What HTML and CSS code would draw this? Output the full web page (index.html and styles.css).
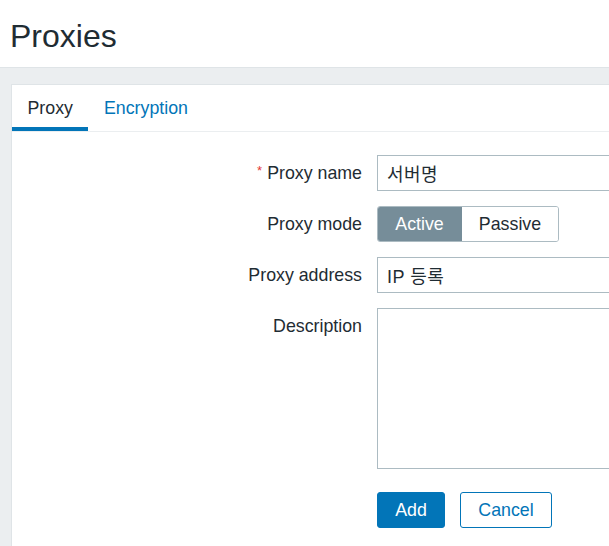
FILE: index.html
```html
<!DOCTYPE html>
<html lang="ko">
<head>
<meta charset="utf-8">
<title>Proxies</title>
<link rel="stylesheet" href="styles.css">
</head>
<body>
<header class="page-header">
  <h1 class="page-title">Proxies</h1>
</header>
<main class="wrapper">
  <section class="card">
    <nav class="tabs">
      <a class="tab tab-active">Proxy</a>
      <a class="tab">Encryption</a>
    </nav>
    <form class="form">
      <label class="form-label"><span class="asterisk">*</span>Proxy name</label>
      <div class="form-field"><input class="text-input" type="text" value="서버명"></div>

      <label class="form-label">Proxy mode</label>
      <div class="form-field">
        <div class="radio-group">
          <span class="radio-item radio-checked">Active</span>
          <span class="radio-item radio-plain">Passive</span>
        </div>
      </div>

      <label class="form-label">Proxy address</label>
      <div class="form-field"><input class="text-input" type="text" value="IP 등록"></div>

      <label class="form-label">Description</label>
      <div class="form-field"><textarea class="text-area"></textarea></div>

      <div class="form-spacer"></div>
      <div class="form-actions">
        <button type="button" class="btn btn-primary">Add</button>
        <button type="button" class="btn btn-alt">Cancel</button>
      </div>
    </form>
  </section>
</main>
</body>
</html>
```
FILE: styles.css
```css
html, body {
  margin: 0;
  padding: 0;
  height: 100%;
  overflow: hidden;
}
body {
  background: #ebeef0;
  color: #1f2c33;
  font-family: "Liberation Sans", Arial, "Noto Sans CJK KR", sans-serif;
  font-size: 17.8px;
}
.page-header {
  background: #ffffff;
  height: 67px;
  border-bottom: 1px solid #dfe4e7;
}
.page-title {
  margin: 0;
  padding: 16px 0 0 10px;
  font-size: 32px;
  line-height: 40px;
  font-weight: normal;
  color: #1f2c33;
}
.wrapper {
  padding: 16px 0 0 11px;
}
.card {
  background: #ffffff;
  border: 1px solid #dfe4e7;
  border-right: none;
  width: 900px;
  height: 600px;
}
.tabs {
  display: flex;
  border-bottom: 1px solid #ebeef0;
}
.tab {
  padding: 13px 15.5px 9px 15.5px;
  line-height: 20px;
  color: #0275b8;
  border-bottom: 4px solid transparent;
  cursor: pointer;
}
.tab-active {
  color: #1f2c33;
  border-bottom-color: #0275b8;
}
.form {
  display: grid;
  grid-template-columns: 350px 1fr;
  column-gap: 15px;
  row-gap: 15px;
  padding-top: 23px;
}
.form-label {
  text-align: right;
  line-height: 36px;
  height: 36px;
  white-space: nowrap;
}
.asterisk {
  color: #e33734;
  font-size: 13px;
  line-height: 1;
  vertical-align: 4px;
  margin-right: 5px;
}
.form-field {
  display: flex;
}
.text-input {
  box-sizing: border-box;
  width: 460px;
  height: 36px;
  margin: 0;
  border: 1px solid #acbbc2;
  border-radius: 0;
  padding: 0 9px;
  font-family: inherit;
  font-size: 18px;
  letter-spacing: 0.5px;
  color: #1f2c33;
  background: #ffffff;
  outline: none;
}
.text-area {
  box-sizing: border-box;
  width: 460px;
  height: 161px;
  margin: 0;
  border: 1px solid #acbbc2;
  border-radius: 0;
  padding: 6px 9px;
  font-family: inherit;
  font-size: 17.8px;
  resize: none;
  outline: none;
  display: block;
}
.radio-group {
  display: flex;
  box-sizing: border-box;
  height: 36px;
  border: 1px solid #acbbc2;
  border-radius: 3px;
  overflow: hidden;
}
.radio-item {
  display: flex;
  align-items: center;
  justify-content: center;
  color: #1f2c33;
  background: #ffffff;
}
.radio-checked {
  background: #768d99;
  color: #ffffff;
  width: 85px;
  margin: -1px 0 -1px -1px;
  height: 36px;
}
.radio-plain {
  width: 96px;
}
.form-actions {
  display: flex;
  gap: 15px;
  margin-top: 8px;
}
.btn {
  box-sizing: border-box;
  height: 36px;
  margin: 0;
  border-radius: 3px;
  font-family: inherit;
  font-size: 17.8px;
  padding: 0;
  cursor: pointer;
}
.btn-primary {
  width: 68px;
  background: #0275b8;
  border: 1px solid #0275b8;
  color: #ffffff;
}
.btn-alt {
  width: 92px;
  background: #ffffff;
  border: 1px solid #0275b8;
  color: #0275b8;
}
```
